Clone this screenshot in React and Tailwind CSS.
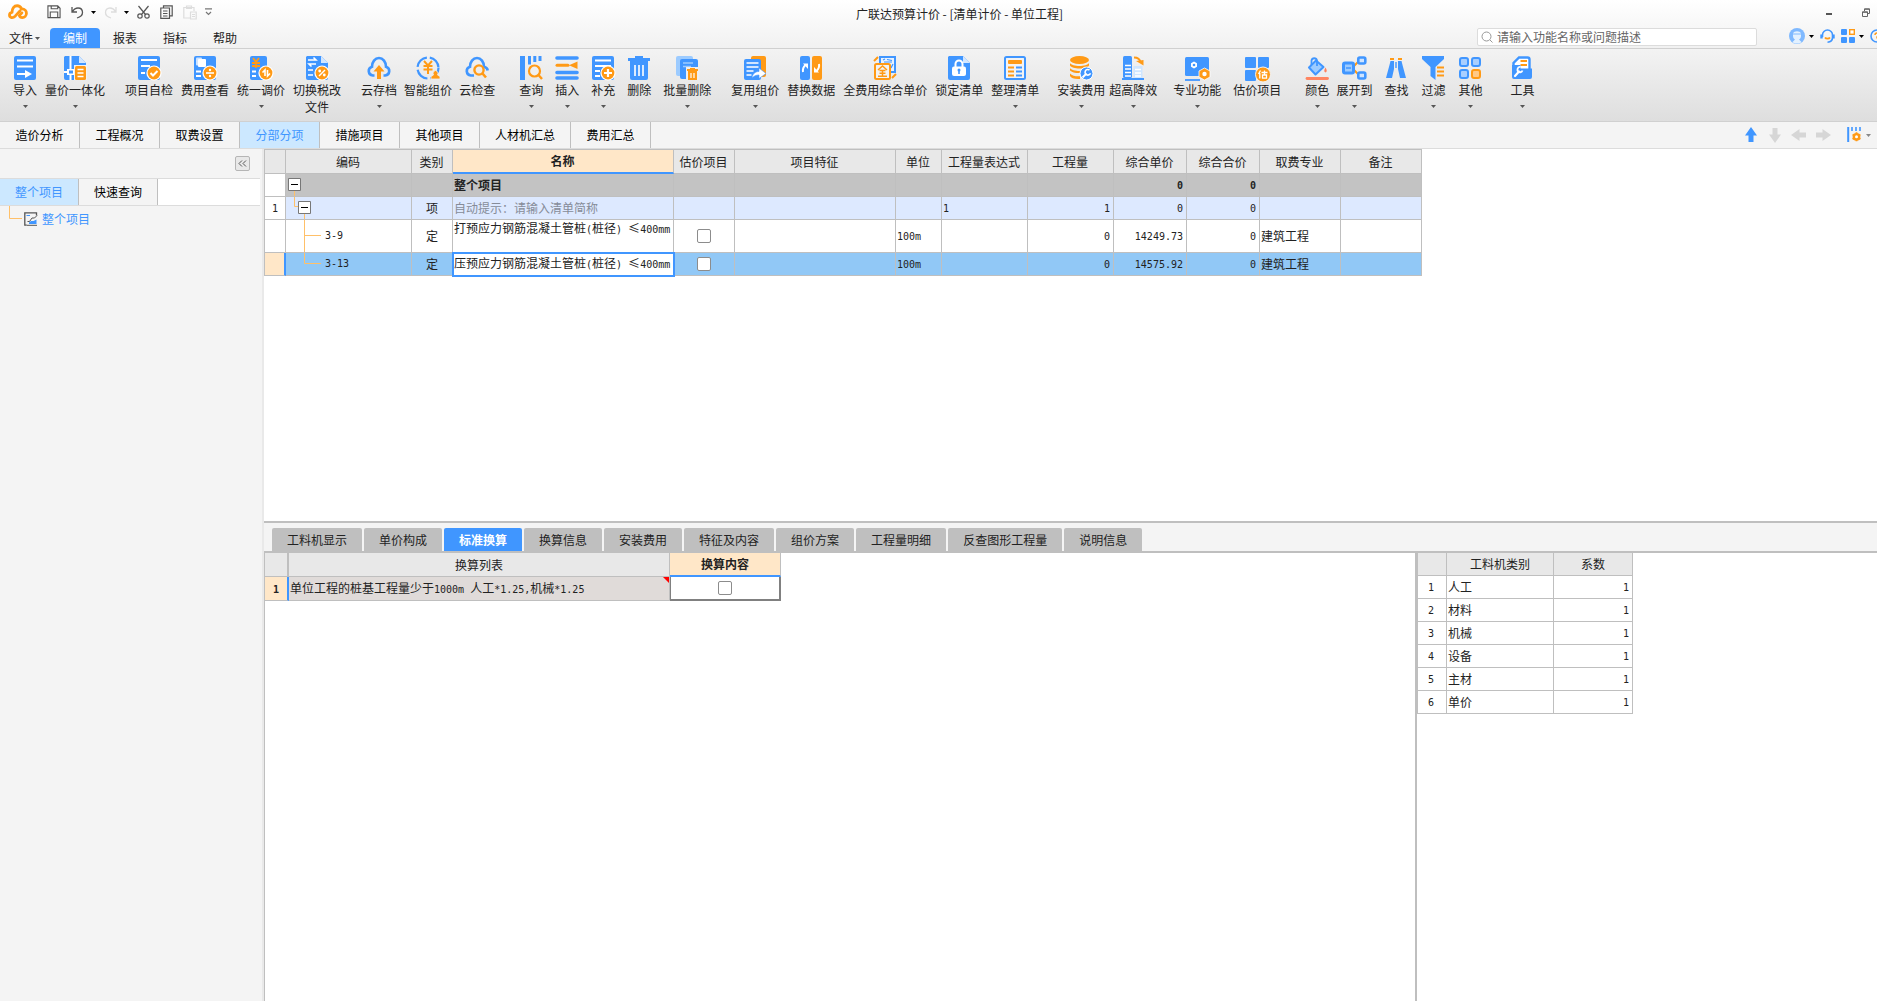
import React, { useState } from 'react';

const B = '#4096ff';
const O = '#ff9a16';

/* ---------- ribbon icons ---------- */

const Sheet = ({ children, fold = false }) => (
  <>
    {fold ? (
      <>
        <path d="M2 0h14l7 7v15a2 2 0 0 1-2 2H3a2 2 0 0 1-2-2V1z" fill={B} />
        <path d="M16 0l7 7h-7z" fill="#d3e7ff" />
      </>
    ) : (
      <rect x="1" y="0" width="22" height="24" rx="2" fill={B} />
    )}
    {children}
  </>
);

const Badge = ({ children }) => (
  <>
    <circle cx="17" cy="17" r="7.6" fill="#fff" />
    <circle cx="17" cy="17" r="6.4" fill={O} />
    {children}
  </>
);

const icons = {
  import: (
    <Sheet>
      <path d="M4 4.500h16M4 10.500h16M4 18h9" stroke="#fff" strokeWidth="2" />
      <path d="M12 14l7 4-7 4z" fill="#fff" />
    </Sheet>
  ),
  integrate: (
    <Sheet fold>
      <path d="M7.500 0v24M1 16h22" stroke="#fff" strokeWidth="2" />
      <rect x="4" y="13" width="7" height="6" fill="#fff" />
      <rect x="6" y="14.500" width="4" height="3" fill={B} />
      <rect x="11" y="9" width="13" height="15" fill="#f3f3f3" />
      <rect x="12" y="10" width="11" height="14" rx="1.500" fill={O} />
      <path d="M14.500 13.500h6M14.500 17h6M14.500 20.500h6" stroke="#fff" strokeWidth="1.500" />
    </Sheet>
  ),
  check: (
    <Sheet>
      <path d="M4 4h16M4 10h9M4 17h4" stroke="#fff" strokeWidth="2" />
      <Badge><path d="M13.500 17l2.500 2.500 4.500-4.500" stroke="#fff" strokeWidth="2" fill="none" /></Badge>
    </Sheet>
  ),
  cost: (
    <Sheet>
      <rect x="3" y="1.500" width="6" height="8" rx="1" fill="#cfe4ff" />
      <rect x="5" y="3" width="8" height="8" rx="1" fill="#fff" />
      <path d="M3 15.500h5M3 20h5" stroke="#fff" strokeWidth="2" />
      <Badge>
        <path d="M13 17h8" stroke="#fff" strokeWidth="1.600" />
        <circle cx="17" cy="14" r="1.200" fill="#fff" />
        <circle cx="17" cy="20" r="1.200" fill="#fff" />
      </Badge>
    </Sheet>
  ),
  adjust: (
    <>
      <rect x="1" y="0" width="17" height="24" rx="2" fill={B} />
      <path d="M4 2l3 4 3-4M3 7h8M3 10h8M7 6v6" stroke={O} strokeWidth="1.800" fill="none" />
      <path d="M3 15.500h4M3 20h4" stroke="#fff" strokeWidth="2" />
      <Badge><path d="M16 20v-6l-2.500 2.500M18.500 14v6l2.500-2.500" stroke="#fff" strokeWidth="1.600" fill="none" /></Badge>
    </>
  ),
  tax: (
    <Sheet fold>
      <path d="M3 4h8l-2.500-2.500M11 8H4l2.500 2.500M3 14h5M3 19h5" stroke="#fff" strokeWidth="1.600" fill="none" />
      <Badge>
        <path d="M14 20l6-6" stroke="#fff" strokeWidth="1.500" />
        <circle cx="14.700" cy="15" r="1.400" fill="#fff" />
        <circle cx="19.300" cy="19" r="1.400" fill="#fff" />
      </Badge>
    </Sheet>
  ),
  cloudUp: (
    <>
      <path d="M7.500 19.500H5.800A4.500 4.500 0 0 1 5 10.700C5 6 8 2 12 2s7 4 7 8.700a4.500 4.500 0 0 1-.8 8.800h-1.700" stroke={B} strokeWidth="2.600" fill="none" />
      <path d="M12 9l5.500 6.500H14V23h-4v-7.500H6.500z" fill={O} />
    </>
  ),
  smart: (
    <>
      <circle cx="12" cy="12" r="10.500" stroke={B} strokeWidth="2.200" strokeDasharray="14 3" fill="none" />
      <path d="M8 5l4 4.500L16 5M7.500 10h9M7.500 13.500h9M12 9.500V18" stroke={O} strokeWidth="2" fill="none" />
      <path d="M19.500 14.500a3 3 0 0 1 2 4.500l2.500 1.500V23h-9v-2.500l2.500-1.500a3 3 0 0 1 2-4.500z" fill={O} stroke="#efefef" strokeWidth=".8" />
    </>
  ),
  cloudSearch: (
    <>
      <path d="M9 19.500H5.800A4.500 4.500 0 0 1 5 10.700C5 6 8 2 12 2s7 4 7 8.700c2 .4 3.500 2 3.700 3.800" stroke={B} strokeWidth="2.600" fill="none" />
      <circle cx="14" cy="14" r="4.600" stroke={O} strokeWidth="2.400" fill="none" />
      <path d="M17.500 17.500l3.500 4" stroke={O} strokeWidth="2.600" />
    </>
  ),
  query: (
    <>
      <path d="M3.500 0v24" stroke={B} strokeWidth="5" />
      <path d="M10.500 0v8.500M15.800 0v6M21 0v5" stroke={B} strokeWidth="3" />
      <circle cx="15.500" cy="15" r="5.500" stroke={O} strokeWidth="2.200" fill="#f0f0f0" />
      <path d="M19.500 19l3.500 4" stroke={O} strokeWidth="2.400" />
    </>
  ),
  insert: (
    <>
      <path d="M2 2h20M2 16.500h20M2 22h20" stroke={B} strokeWidth="3.600" strokeLinecap="round" />
      <path d="M2 9.300h11" stroke={O} strokeWidth="3" strokeLinecap="round" />
      <path d="M22.500 5.500v7.500L14 9.300z" fill={O} />
    </>
  ),
  supplement: (
    <Sheet>
      <path d="M4 4.500h16" stroke="#fff" strokeWidth="2" />
      <path d="M4 10h16M4 15h5M4 20h5" stroke="#fff" strokeWidth="1.800" />
      <Badge><path d="M17 13v8M13 17h8" stroke="#fff" strokeWidth="2.200" /></Badge>
    </Sheet>
  ),
  trash: (
    <>
      <path d="M8 0h8v2h7v3H1V2h7z" fill={B} />
      <path d="M3 4h18v18a2 2 0 0 1-2 2H5a2 2 0 0 1-2-2z" fill={B} />
      <path d="M8 9v11M12 9v11M16 9v11" stroke="#fff" strokeWidth="1.600" />
    </>
  ),
  batchDelete: (
    <>
      <rect x="1" y="0" width="17" height="20" rx="2" fill="#9ccbff" />
      <rect x="5" y="3" width="18" height="20" rx="2" fill={B} />
      <path d="M8 7h10M8 10.500h8" stroke="#9ccbff" strokeWidth="1.600" />
      <path d="M11 11h13v13H11z" fill="#efefef" />
      <path d="M12 13h3v-1h5v1h3v2H12zM13 15h9v9h-9z" fill={O} />
      <path d="M16 17v5M19 17v5" stroke="#fff" strokeWidth="1.200" />
    </>
  ),
  reuse: (
    <>
      <rect x="8" y="0" width="15" height="21" rx="2" fill={O} />
      <rect x="1" y="3" width="17" height="21" rx="2" fill={B} />
      <path d="M3.500 7h12M3.500 11h12M3.500 15h7M3.500 19h5" stroke="#fff" strokeWidth="1.600" />
      <path d="M9 22c.5-4 3-6.500 7-6.500V12l7 5.500-7 5v-3.500c-3 0-5 1-7 3z" fill="#fff" stroke={B} strokeWidth=".6" />
    </>
  ),
  replace: (
    <>
      <rect x="1" y="0" width="10" height="24" rx="2" fill={B} />
      <rect x="13" y="0" width="10" height="24" rx="2" fill={O} />
      <path d="M4 16c-.5-3 .3-5 2.500-7" stroke="#fff" strokeWidth="2" fill="none" />
      <path d="M4 7.500h5v5.500z" fill="#fff" />
      <path d="M20 8c.5 3-.3 5-2.500 7" stroke="#fff" strokeWidth="2" fill="none" />
      <path d="M20 16.500h-5V11z" fill="#fff" />
    </>
  ),
  full: (
    <>
      <path d="M7 7V1h15v15h-5" stroke={B} strokeWidth="2" fill="#e8f2ff" />
      <path d="M10 4l2-1M14 3.500l5 1M11 6h8M20 8l-2 4" stroke={B} strokeWidth="1.200" />
      <rect x="2" y="8" width="15" height="15" rx="1.500" stroke={O} strokeWidth="2" fill="#f3f3f3" />
      <path d="M1 5l4-4M19 22l4-4" stroke={O} strokeWidth="2" />
      <path d="M5 14l4.500-4 4.500 4M6.500 14.500h6M6.500 17.300h6M5 20.300h9M9.500 14v6" stroke={O} strokeWidth="1.500" fill="none" />
    </>
  ),
  lock: (
    <Sheet fold>
      <path d="M8.500 11V8a3.500 3.500 0 0 1 7 0v3" stroke="#fff" strokeWidth="2" fill="none" />
      <rect x="5" y="10.500" width="14" height="9.500" rx="2" fill="#fff" />
      <circle cx="12" cy="14" r="1.500" fill={B} />
      <path d="M12 14v4" stroke={B} strokeWidth="1.600" />
    </Sheet>
  ),
  arrange: (
    <>
      <rect x="2" y="1" width="20" height="22" rx="1.500" stroke={B} strokeWidth="2" fill="#f3f3f3" />
      <rect x="5" y="4" width="14" height="4" rx="1" fill={O} />
      <path d="M5 11.500h6M5 15.500h6M5 19.500h6" stroke={O} strokeWidth="1.800" />
      <path d="M13 11.500h6M13 15.500h6M13 19.500h6" stroke={B} strokeWidth="1.800" />
    </>
  ),
  install: (
    <>
      <ellipse cx="10.500" cy="4" rx="9.500" ry="4" fill={O} />
      <path d="M1 7c2 4 17 4 19 0v2.500c-2 4-17 4-19 0zM1 12c2 4 17 4 19 0v2c-3 4-16 4-19 .5zM1 17.500c2 2.500 6 3 10 2.800V23C6 23.500 2 22 1 20z" fill={O} />
      <circle cx="17.500" cy="17.500" r="6.500" fill={B} stroke="#fff" />
      <path d="M13.500 21.500l4-4" stroke="#fff" strokeWidth="2" />
      <path d="M20.500 14a2.800 2.800 0 1 0 1 3.200" stroke="#fff" strokeWidth="1.600" fill="none" />
    </>
  ),
  height: (
    <>
      <rect x="2" y="0" width="9" height="22" rx="1.500" fill={B} />
      <path d="M4 9.500h6M4 13h6M4 16.500h6M4 20h6" stroke="#fff" strokeWidth="1.600" />
      <rect x="12.500" y="10" width="9" height="12" fill="#cfe6ff" />
      <path d="M14 13.500h6M14 17h6M14 20h6" stroke="#fff" strokeWidth="1.400" />
      <path d="M1 23h22" stroke={B} strokeWidth="2" />
      <path d="M13 1.500c4 0 6 2 6.500 5" stroke={O} strokeWidth="2" fill="none" />
      <path d="M15 5l7.500-1v5.500z" fill={O} />
    </>
  ),
  pro: (
    <>
      <rect x="0" y="1" width="24" height="19" rx="1.500" fill={B} />
      <path d="M0 24h15" stroke={B} strokeWidth="1.800" />
      <path d="M9 5.500l3 1.700v3.500l-3 1.800-3-1.800V7.200z" fill="#fff" />
      <circle cx="9" cy="9" r="1.300" fill={B} />
      <path d="M19.500 12l5.500 3v6l-5.500 3-5.500-3v-6z" fill={O} stroke="#fff" strokeWidth=".8" />
      <circle cx="19.500" cy="18" r="2.200" fill="#fff" />
    </>
  ),
  estimate: (
    <>
      <rect x="0" y="1" width="11" height="11" rx="1" fill={B} />
      <rect x="13" y="1" width="11" height="11" rx="1" fill={B} />
      <rect x="0" y="14" width="11" height="11" rx="1" fill={B} />
      <circle cx="18" cy="18.500" r="7.500" fill={O} stroke="#f3f3f3" />
      <path d="M15.500 14.500l-2 3.500M14.800 17v5.500M16.500 16.500h6M19.500 14.500v4M17.500 19h4v3.200h-4z" stroke="#fff" strokeWidth="1.300" fill="none" />
    </>
  ),
  color: (
    <>
      <path d="M11 4.500l7.500 6.500-8 7.500-6.500-7z" fill="#9ccbff" stroke={B} strokeWidth="2" strokeLinejoin="round" />
      <path d="M6.500 9V4.500a2.800 2.800 0 0 1 5.500 0V10" stroke={B} strokeWidth="1.800" fill="none" />
      <path d="M20.500 11.500c1.500 2.500 1.800 4.500 0 5-1.800-.5-1.500-2.500 0-5z" fill="#ff7f5c" />
      <path d="M2 22.500h20.500" stroke="#ff8561" strokeWidth="2.800" strokeLinecap="round" />
    </>
  ),
  expand: (
    <>
      <path d="M11 11l6-6M11 13l6 6" stroke={O} strokeWidth="2" />
      <rect x="1.500" y="7" width="10" height="10" rx="1.500" fill="#9ccbff" stroke={B} strokeWidth="3" />
      <path d="M4 12h5" stroke={B} strokeWidth="1.500" />
      <rect x="16.300" y="1.500" width="7" height="6" rx="1.500" fill="#cfe4ff" stroke={B} strokeWidth="2.600" />
      <rect x="16.300" y="16.500" width="7" height="6" rx="1.500" fill="#cfe4ff" stroke={B} strokeWidth="2.600" />
    </>
  ),
  find: (
    <>
      <path d="M6.500 5H10v8L8 22H2l3.500-13zM17.500 5H14v8l2 9h6l-3.500-13z" fill={B} />
      <path d="M12 6v6" stroke={B} strokeWidth="1.400" />
      <path d="M6 3h4M14 3h4" stroke={O} strokeWidth="2" />
    </>
  ),
  filter: (
    <>
      <path d="M1 0h22v3l-8.500 8v13L9.500 20v-9L1 3z" fill={B} />
      <path d="M16 11.500h7M16 15.500h7M16 19.500h7" stroke={O} strokeWidth="2" />
    </>
  ),
  other: (
    <>
      <rect x="2" y="2" width="8" height="8" rx="2" fill="#a9cfff" stroke={B} strokeWidth="2" />
      <rect x="14" y="2" width="8" height="8" rx="2" fill="#a9cfff" stroke={B} strokeWidth="2" />
      <rect x="2" y="14" width="8" height="8" rx="2" fill="#a9cfff" stroke={B} strokeWidth="2" />
      <rect x="14" y="14" width="8" height="8" rx="2" fill="#ffc987" stroke={O} strokeWidth="2" />
    </>
  ),
  tools: (
    <>
      <path d="M3.500 13V7l5.500-5.500h8.500a2 2 0 0 1 2 2V13" stroke={B} strokeWidth="2.400" fill="#fff" />
      <path d="M10.500 5h6.500M10.500 9h6.500" stroke={O} strokeWidth="1.800" />
      <path d="M2 9h8.500v3.500H22V21a2 2 0 0 1-2 2H4a2 2 0 0 1-2-2z" fill={B} />
      <path d="M5 20l4-4.500" stroke="#fff" strokeWidth="2.200" strokeLinecap="round" />
      <path d="M10.500 11a2.600 2.600 0 1 0 2 3.500" stroke="#fff" strokeWidth="1.800" fill="none" />
    </>
  ),
};

const Caret = ({ className = 'text-[#555]' }) => (
  <svg width="5" height="3" viewBox="0 0 5 3" className={className} aria-hidden="true">
    <path d="M0 0h5L2.500 3z" fill="currentColor" />
  </svg>
);

const ribbon = [
  { ml: 'ml-[13px]', gap: 'gap-2', items: [['import', '导入', true], ['integrate', '量价一体化', true]] },
  { ml: 'ml-5', gap: 'gap-2', items: [['check', '项目自检'], ['cost', '费用查看'], ['adjust', '统一调价', true], ['tax', '切换税改', false, '文件']] },
  { ml: 'ml-5', gap: 'gap-[7px]', items: [['cloudUp', '云存档', true], ['smart', '智能组价'], ['cloudSearch', '云检查']] },
  { ml: 'ml-6', gap: 'gap-3', items: [['query', '查询', true], ['insert', '插入', true], ['supplement', '补充', true], ['trash', '删除'], ['batchDelete', '批量删除', true]] },
  { ml: 'ml-5', gap: 'gap-2', items: [['reuse', '复用组价', true], ['replace', '替换数据'], ['full', '全费用综合单价'], ['lock', '锁定清单'], ['arrange', '整理清单', true]] },
  { ml: 'ml-[18px]', gap: 'gap-1', items: [['install', '安装费用', true], ['height', '超高降效', true]] },
  { ml: 'ml-4', gap: 'gap-3', items: [['pro', '专业功能', true], ['estimate', '估价项目']] },
  { ml: 'ml-6', gap: 'gap-[7px]', items: [['color', '颜色', true], ['expand', '展开到', true]] },
  { ml: 'ml-3', gap: 'gap-[13px]', items: [['find', '查找'], ['filter', '过滤', true], ['other', '其他', true]] },
  { ml: 'ml-7', gap: 'gap-2', items: [['tools', '工具', true]] },
];

/* Half-width runs are set in a monospace face so that they take half of a full-width character. */
const Txt = ({ children }) =>
  String(children)
    .split(/([\x20-\x7e]+)/)
    .filter(Boolean)
    .map((run, i) =>
      /^[\x20-\x7e]/.test(run) ? (
        <span key={i} className="font-['DejaVu_Sans_Mono',monospace] text-[10px] whitespace-pre">{run}</span>
      ) : (
        run
      )
    );

const Check = ({ label }) => (
  <input
    type="checkbox"
    aria-label={label}
    className="block mx-auto w-3.5 h-3.5 appearance-none rounded-xs border border-[#8c8c8c] bg-white checked:bg-[#4096ff]"
  />
);

const QuickBar = () => (
  <div className="flex items-center w-[212px] pl-2 pb-1 text-[#555]">
    <svg width="23" height="18" viewBox="0 0 23 18" fill="none" stroke={O} strokeWidth="3.2" strokeLinecap="round" strokeLinejoin="round" aria-hidden="true">
      <path d="M14 7.500L8.500 13.500C7 15 5.500 15.800 4 15.400 2.500 15 1.700 13.800 1.700 12.500c0-1.800 1.200-3 3-3.200C4.500 5 7 1.800 10.500 1.800c2.200 0 4 1.200 4.800 3.200" />
      <path d="M16 5.500c3.200 0 5.200 2.200 5.200 5s-2 4.900-4.700 4.900c-1.800 0-3-.8-3.500-2.200L16 10" />
    </svg>
    <div className="flex items-center ml-[19px]">
      <button aria-label="保存" className="w-4">
        <svg width="14" height="14" viewBox="0 0 15 15" fill="none" stroke="currentColor" strokeWidth="1.200">
          <path d="M1 13.500V1h10.500l2.500 2.500v10zM4.500 1v3h7V1M3.500 13V7.500h8V13" />
        </svg>
      </button>
      <button aria-label="撤销" className="flex items-center gap-[7px] ml-2">
        <svg width="13" height="13" viewBox="0 0 13 13" fill="none" stroke="currentColor" strokeWidth="1.300">
          <path d="M1 1v5h5M1.500 5.500C3 3 5 2 7 2c3 0 4.500 2 4.500 4.500S9.500 11 6 12" />
        </svg>
        <Caret className="text-black" />
      </button>
      <button aria-label="恢复" className="flex items-center gap-[7px] ml-2">
        <svg width="13" height="13" viewBox="0 0 13 13" fill="none" stroke="#ddd" strokeWidth="1.300">
          <path d="M12 1v5H7M11.500 5.500C10 3 8 2 6 2 3 2 1.500 4 1.500 6.500S3.500 11 7 12" />
        </svg>
        <Caret className="text-black" />
      </button>
      <button aria-label="剪切" className="ml-2">
        <svg width="13" height="14" viewBox="0 0 13 14" fill="none" stroke="currentColor" strokeWidth="1.200">
          <path d="M1.500 1l7 8.500M11.500 1l-7 8.500" />
          <circle cx="3" cy="11" r="2.200" />
          <circle cx="10" cy="11" r="2.200" />
        </svg>
      </button>
      <button aria-label="复制" className="ml-2.5">
        <svg width="13" height="14" viewBox="0 0 13 14" fill="none" stroke="currentColor" strokeWidth="1.200">
          <path d="M3.500 3V.8h8.700v10H10M.8 3H9.500v10.300H.8zM3 6h4.500M3 8.500h4.500M3 11h4.500" />
        </svg>
      </button>
      <button aria-label="粘贴" className="ml-2.5">
        <svg width="14" height="15" viewBox="0 0 14 15" fill="none" stroke="#ddd" strokeWidth="1.200">
          <path d="M7 13H.8V2.500H11V6M3.500 2.500V1h5v2.500h-5zM7.500 7h5.700v7H7.500zM9 9.500h3M9 11.500h3" />
        </svg>
      </button>
      <button aria-label="自定义快速访问工具栏" className="ml-2">
        <svg width="7" height="8" viewBox="0 0 7 8" fill="none" stroke="#777" strokeWidth="1.200">
          <path d="M0 .8h7M1 4l2.500 2.500L6 4" />
        </svg>
      </button>
    </div>
  </div>
);

const MenuRow = () => (
  <div className="flex h-5 items-stretch">
    <button className="flex items-center w-[50px] pl-[9px] gap-[2px]">
      文件
      <Caret />
    </button>
    <button className="w-[50px] rounded-t-sm bg-[#4096ff] text-white">编制</button>
    {['报表', '指标', '帮助'].map((m) => (
      <button key={m} className="w-[50px]">{m}</button>
    ))}
    <label className="flex items-center ml-auto w-[280px] h-[18px] border border-[#dcdcdc] rounded-xs bg-white pl-[3px]">
      <svg width="12" height="12" viewBox="0 0 12 12" fill="none" stroke="#999" aria-hidden="true">
        <circle cx="5.500" cy="5.500" r="4.500" />
        <path d="M9 9l2.500 2.500" />
      </svg>
      <input
        type="text"
        aria-label="搜索"
        placeholder="请输入功能名称或问题描述"
        className="flex-1 min-w-0 ml-1 outline-none placeholder:text-[#666] text-[12px] leading-4"
      />
    </label>
    <div className="flex items-center w-[120px] pl-8 pb-1 overflow-hidden">
      <button aria-label="账户" className="flex shrink-0 items-center gap-1">
        <svg width="16" height="16" viewBox="0 0 16 16">
          <circle cx="8" cy="8" r="8" fill="#7fb9ff" />
          <path d="M4 5.500c1-3 7-3 8 0v2.500c0 2-1 3-2 3.500l2.500 2.500c-2 2-7 2-9 0L6 11.500C5 11 4 10 4 8z" fill="#e3f1ff" />
          <path d="M4 6h8" stroke="#7fb9ff" />
        </svg>
        <Caret className="text-black" />
      </button>
      <button aria-label="客服" className="shrink-0 ml-1.5">
        <svg width="15" height="15" viewBox="0 0 15 15" fill="none">
          <path d="M2.500 8V6a5 5 0 0 1 10 0v2.500c0 2.500-2 4.500-5 4.800" stroke={B} strokeWidth="1.600" />
          <path d="M1.500 5.500v4M13.500 5.500v4" stroke={B} strokeWidth="2.400" />
          <path d="M5 8.500c1 1.500 4 1.500 5 0" stroke={O} strokeWidth="1.800" />
        </svg>
      </button>
      <button aria-label="应用" className="flex shrink-0 items-center gap-1 ml-1.5">
        <svg width="14" height="14" viewBox="0 0 14 14">
          <rect x="0" y="0" width="6" height="6" rx="1" fill={B} />
          <rect x="0" y="8" width="6" height="6" rx="1" fill={B} />
          <rect x="8" y="8" width="6" height="6" rx="1" fill={B} />
          <rect x="8.700" y=".7" width="4.600" height="4.600" stroke={O} strokeWidth="1.400" fill="#fff" />
        </svg>
        <Caret className="text-black" />
      </button>
      <button aria-label="帮助" className="shrink-0 ml-1.5">
        <svg width="14" height="14" viewBox="0 0 14 14" fill="none">
          <circle cx="7" cy="7" r="6" stroke={B} strokeWidth="1.600" />
          <path d="M5 6a2 2 0 1 1 2 2v1.500" stroke={O} strokeWidth="1.400" />
        </svg>
      </button>
    </div>
  </div>
);

const Ribbon = () => (
  <div className="flex h-[74px] overflow-hidden bg-gradient-to-b from-[#f3f3f3] to-[#dedede] border-y border-[#d0d0d0]">
    {ribbon.map((group, g) => (
      <div key={g} className={`flex shrink-0 ${group.ml} ${group.gap}`}>
        {group.items.map(([icon, label, caret, second]) => (
          <button key={label} className="flex flex-col items-center pt-[7px] leading-[17px] whitespace-nowrap text-[#222]">
            <svg width="24" height="24" viewBox="0 0 24 24" className="overflow-visible" aria-hidden="true">{icons[icon]}</svg>
            <span className="mt-px">{label}</span>
            {second && <span>{second}</span>}
            {caret && <span className="mt-[7px]"><Caret /></span>}
          </button>
        ))}
      </div>
    ))}
  </div>
);

const pageTabs = ['造价分析', '工程概况', '取费设置', '分部分项', '措施项目', '其他项目', '人材机汇总', '费用汇总'];

const Arrow = ({ label, color, rotate = '' }) => (
  <button aria-label={label}>
    <svg width="16" height="16" viewBox="0 0 16 16" className={rotate}>
      <path d="M8 0l6 8.500h-3.500V15h-5V8.500H2z" fill={color} />
    </svg>
  </button>
);

const PageTabs = () => {
  const [active, setActive] = useState('分部分项');
  return (
    <div className="flex h-[27px] bg-[#f4f4f4] border-b border-[#dcdcdc]">
      {pageTabs.map((t) => (
        <button
          key={t}
          onClick={() => setActive(t)}
          className={`px-[15px] min-w-20 border-r border-[#bfbfbf] ${active === t ? 'bg-[#cce8ff] text-[#4096ff]' : 'text-black'}`}
        >
          {t}
        </button>
      ))}
      <div className="flex items-center gap-2 ml-auto pr-1.5">
        <Arrow label="上移" color={B} />
        <Arrow label="下移" color="#d6d6d6" rotate="rotate-180" />
        <Arrow label="左移" color="#d6d6d6" rotate="-rotate-90" />
        <Arrow label="右移" color="#d6d6d6" rotate="rotate-90" />
        <button aria-label="列设置" className="flex items-center gap-1 ml-2">
          <svg width="15" height="16" viewBox="0 0 15 16">
            <path d="M1.200 0v15" stroke={B} strokeWidth="2" />
            <path d="M5 0v4M9 0v4M13 0v4" stroke={B} strokeWidth="1.600" />
            <circle cx="9.500" cy="9.800" r="2.600" stroke={O} strokeWidth="2.600" fill="none" />
            <path d="M9.500 5.300v9M5.600 7.500l7.800 4.600M13.400 7.500l-7.800 4.600" stroke={O} strokeWidth="1.800" />
            <circle cx="9.500" cy="9.800" r="1.500" fill="#fff" />
          </svg>
          <Caret className="text-[#888]" />
        </button>
      </div>
    </div>
  );
};

const LeftPanel = () => (
  <aside className="flex flex-col shrink-0 w-[264px] bg-[#f4f4f4] border-r-2 border-[#e9e9e9]">
    <div className="flex items-center justify-end h-[29px] pr-3">
      <button aria-label="收起" className="flex items-center justify-center w-[15px] h-[15px] rounded-xs border border-[#b5b5b5] bg-[#e8e8e8]">
        <svg width="9" height="7" viewBox="0 0 9 7" fill="none" stroke="#555">
          <path d="M4 .5l-3 3 3 3M8 .5l-3 3 3 3" />
        </svg>
      </button>
    </div>
    <div className="flex h-7 mr-0.5 border-y border-[#dcdcdc] bg-white">
      <button className="w-[79px] border-r border-[#bfbfbf] bg-[#cce8ff] text-[#4096ff]">整个项目</button>
      <button className="w-[79px] border-r border-[#bfbfbf] bg-[#f4f4f4] text-black">快速查询</button>
    </div>
    <div className="flex h-6 items-start pl-[9px] text-[#4096ff]">
      <svg width="13" height="14" viewBox="0 0 13 14" fill="none" stroke="#ffc069" aria-hidden="true">
        <path d="M.5 0v12.500H13" />
      </svg>
      <svg width="14" height="14" viewBox="0 0 14 14" className="ml-0.5 mt-1.5" aria-hidden="true">
        <path d="M12.500 3.500V.8H.8v12.400h2" stroke="#555" strokeWidth="1.300" fill="none" />
        <path d="M2.500 3.500h3.500" stroke={B} />
        <path d="M5 12V10.500l2-1.500h2.500l3-1.500V12z" fill={B} />
        <path d="M3 13.300h10M3.500 9.500h2L8 6h2.500L13 3.500" stroke="#555" fill="none" />
      </svg>
      <button className="ml-1 mt-1 leading-[18px]">整个项目</button>
    </div>
  </aside>
);

const Expander = ({ deep }) => (
  <button aria-label="折叠" className="block">
    <svg width="26" height="22" viewBox="0 0 26 22" className="block">
      {deep ? (
        <>
          <path d="M8.500 0v9.500h4M18.500 17v5" stroke="#ffc069" fill="none" />
          <path d="M12.500 4.500h12v12h-12z" fill="#fff" stroke="#777" />
          <path d="M15 10.500h7" stroke="#000" />
        </>
      ) : (
        <>
          <path d="M8.500 17v5" stroke="#ffc069" />
          <path d="M2.500 4.500h12v12h-12z" fill="#fff" stroke="#777" />
          <path d="M5 10.500h7" stroke="#000" />
        </>
      )}
    </svg>
  </button>
);

const columns = [
  ['编码', 'w-[126px]'],
  ['类别', 'w-[41px]'],
  ['名称', 'w-[221px]'],
  ['估价项目', 'w-[61px]'],
  ['项目特征', 'w-[161px]'],
  ['单位', 'w-[46px]'],
  ['工程量表达式', 'w-[86px]'],
  ['工程量', 'w-[86px]'],
  ['综合单价', 'w-[73px]'],
  ['综合合价', 'w-[73px]'],
  ['取费专业', 'w-[81px]'],
  ['备注', 'w-[81px]'],
];

const cell = 'border-r border-b border-[#bfbfbf] p-0';
const left = `${cell} pl-px text-left whitespace-nowrap`;
const right = `${cell} pr-[3px] text-right`;

const MainGrid = () => (
  <table className="table-fixed border-separate border-spacing-0 w-[1158px] border-t border-l border-[#bfbfbf] text-[#222]">
    <thead>
      <tr className="h-6 bg-[#e8e8e8]">
        <th className={`${cell} w-[21px]`} aria-label="序号"></th>
        {columns.map(([name, w]) => (
          <th
            key={name}
            scope="col"
            className={`${w} p-0 pr-px border-r border-[#bfbfbf] whitespace-nowrap ${
              name === '名称' ? 'font-bold bg-[#ffe7c8] border-b-2 border-b-[#4096ff]' : 'font-normal border-b'
            }`}
          >
            {name}
          </th>
        ))}
      </tr>
    </thead>
    <tbody>
      <tr className="h-[23px] bg-[#c3c3c3] font-bold">
        <th className={`${cell} bg-white`}></th>
        <td className={cell}><Expander /></td>
        <td className={cell}></td>
        <td className={left}>整个项目</td>
        <td className={cell}></td>
        <td className={cell}></td>
        <td className={cell}></td>
        <td className={cell}></td>
        <td className={cell}></td>
        <td className={right}><Txt>0</Txt></td>
        <td className={right}><Txt>0</Txt></td>
        <td className={cell}></td>
        <td className={cell}></td>
      </tr>
      <tr className="h-[23px] bg-[#dde9ff]">
        <th className={`${cell} bg-white font-normal`}><Txt>1</Txt></th>
        <td className={cell}><Expander deep /></td>
        <td className={`${cell} text-center`}>项</td>
        <td className={`${left} text-[#868c98]`}>自动提示：请输入清单简称</td>
        <td className={cell}></td>
        <td className={cell}></td>
        <td className={cell}></td>
        <td className={left}><Txt>1</Txt></td>
        <td className={right}><Txt>1</Txt></td>
        <td className={right}><Txt>0</Txt></td>
        <td className={right}><Txt>0</Txt></td>
        <td className={cell}></td>
        <td className={cell}></td>
      </tr>
      <tr className="h-[33px] bg-white">
        <th className={cell}></th>
        <td className={cell}>
          <div className="flex items-center gap-1">
            <svg width="35" height="32" viewBox="0 0 35 32" className="block" stroke="#ffc069" aria-hidden="true">
              <path d="M18.500 0v32M18.500 15.500H35" />
            </svg>
            <Txt>3-9</Txt>
          </div>
        </td>
        <td className={`${cell} text-center`}>定</td>
        <td className={`${left} align-top`}><Txt>打预应力钢筋混凝土管桩(桩径) ≤400mm</Txt></td>
        <td className={cell}><Check label="估价项目 3-9" /></td>
        <td className={cell}></td>
        <td className={left}><Txt>100m</Txt></td>
        <td className={cell}></td>
        <td className={right}><Txt>0</Txt></td>
        <td className={right}><Txt>14249.73</Txt></td>
        <td className={right}><Txt>0</Txt></td>
        <td className={left}>建筑工程</td>
        <td className={cell}></td>
      </tr>
      <tr className="h-[23px] bg-[#91c8f6]">
        <th className="p-0 bg-[#ffe7c8] border-b border-b-[#bfbfbf] border-r-2 border-r-[#4096ff]"></th>
        <td className={cell}>
          <div className="flex items-center gap-1">
            <svg width="35" height="22" viewBox="0 0 35 22" className="block" stroke="#ffc069" fill="none" aria-hidden="true">
              <path d="M18.500 0v10.500H35" />
            </svg>
            <Txt>3-13</Txt>
          </div>
        </td>
        <td className={`${cell} text-center`}>定</td>
        <td className={`${left} bg-white outline-2 -outline-offset-1 outline-[#4096ff]`}><Txt>压预应力钢筋混凝土管桩(桩径) ≤400mm</Txt></td>
        <td className={cell}><Check label="估价项目 3-13" /></td>
        <td className={cell}></td>
        <td className={left}><Txt>100m</Txt></td>
        <td className={cell}></td>
        <td className={right}><Txt>0</Txt></td>
        <td className={right}><Txt>14575.92</Txt></td>
        <td className={right}><Txt>0</Txt></td>
        <td className={left}>建筑工程</td>
        <td className={cell}></td>
      </tr>
    </tbody>
  </table>
);

const detailTabs = ['工料机显示', '单价构成', '标准换算', '换算信息', '安装费用', '特征及内容', '组价方案', '工程量明细', '反查图形工程量', '说明信息'];

const ConversionTable = () => (
  <table className="table-fixed border-separate border-spacing-0 w-[517px] border-l border-[#bfbfbf] text-[#222]">
    <thead>
      <tr className="h-6 bg-[#e8e8e8]">
        <th className="w-6 p-0 border-b border-r-2 border-[#bfbfbf]" aria-label="序号"></th>
        <th className={`${cell} w-[381px] font-normal`}>换算列表</th>
        <th className="w-[111px] p-0 bg-[#ffe7c8] border-r border-r-[#bfbfbf] border-b-2 border-b-[#4096ff]">换算内容</th>
      </tr>
    </thead>
    <tbody>
      <tr className="h-6">
        <th className="p-0 bg-[#ffe7c8] border-b border-b-[#bfbfbf] border-r-2 border-r-[#4096ff]"><Txt>1</Txt></th>
        <td className={`${left} relative bg-[#e0dbd9]`}>
          <Txt>单位工程的桩基工程量少于1000m 人工*1.25,机械*1.25</Txt>
          <svg width="6" height="6" viewBox="0 0 6 6" className="absolute top-0 right-0" aria-hidden="true">
            <path d="M0 0h6v6z" fill="#f00" />
          </svg>
        </td>
        <td className="p-0 bg-white border-l border-b-2 border-r-2 border-[#808080]"><Check label="换算内容" /></td>
      </tr>
    </tbody>
  </table>
);

const FactorTable = () => (
  <table className="table-fixed border-separate border-spacing-0 w-[216px] border-l border-[#bfbfbf] text-[#222]">
    <thead>
      <tr className="h-[23px] bg-[#e8e8e8]">
        <th className={`${cell} w-[29px]`} aria-label="序号"></th>
        <th className={`${cell} w-[107px] font-normal`}>工料机类别</th>
        <th className={`${cell} w-[79px] font-normal`}>系数</th>
      </tr>
    </thead>
    <tbody>
      {['人工', '材料', '机械', '设备', '主材', '单价'].map((name, i) => (
        <tr key={name} className="h-[23px] bg-white">
          <th className={`${cell} pr-0.5 font-normal`}><Txt>{i + 1}</Txt></th>
          <td className={left}>{name}</td>
          <td className={right}><Txt>1</Txt></td>
        </tr>
      ))}
    </tbody>
  </table>
);

const DetailPanel = () => {
  const [active, setActive] = useState('标准换算');
  return (
    <section className="flex flex-col h-[480px] border-t-2 border-[#bfbfbf]">
      <div className="flex gap-0.5 h-[30px] pt-[5px] pl-2 bg-[#f4f4f4] border-b-2 border-[#bfbfbf]">
        {detailTabs.map((t) => (
          <button
            key={t}
            onClick={() => setActive(t)}
            className={`px-[15px] rounded-t-xs ${active === t ? 'bg-[#4096ff] text-white font-bold' : 'bg-[#bfbfbf] text-[#222]'}`}
          >
            {t}
          </button>
        ))}
      </div>
      <div className="flex flex-1 min-h-0">
        <div className="flex-1 min-w-0 border-l border-[#bfbfbf]">
          <div className="-ml-px">
            <ConversionTable />
          </div>
        </div>
        <div className="w-[462px] shrink-0 border-l-2 border-[#bfbfbf]">
          <FactorTable />
        </div>
      </div>
    </section>
  );
};

const App = () => (
  <div className="flex flex-col h-screen overflow-hidden bg-white font-['Noto_Sans_CJK_SC',sans-serif] text-[12px] leading-4 text-[#222]">
    <header className="bg-gradient-to-b from-white to-[#f1f1f1]">
      <div className="flex h-7">
        <QuickBar />
        <h1 className="flex-1 self-center text-center text-[#222]">广联达预算计价 - [清单计价 - 单位工程]</h1>
        <div className="flex items-center justify-end w-[170px] gap-[30px] pr-[7px] pb-1">
          <button aria-label="最小化">
            <svg width="6" height="6" viewBox="0 0 6 6"><path d="M0 5h6" stroke="#555" strokeWidth="2" /></svg>
          </button>
          <button aria-label="还原">
            <svg width="8" height="9" viewBox="0 0 8 9" fill="none" stroke="#666">
              <path d="M2.500 3V.8h5v4.700H6M.5 3.800h5v4.700h-5zM2.500 1.300h5M.5 4.300h5" />
            </svg>
          </button>
        </div>
      </div>
      <MenuRow />
    </header>
    <Ribbon />
    <PageTabs />
    <main className="flex flex-1 min-h-0">
      <LeftPanel />
      <div className="flex flex-col flex-1 min-w-0">
        <div className="flex-1 min-h-0 overflow-hidden">
          <MainGrid />
        </div>
        <DetailPanel />
      </div>
    </main>
  </div>
);

export default App;
